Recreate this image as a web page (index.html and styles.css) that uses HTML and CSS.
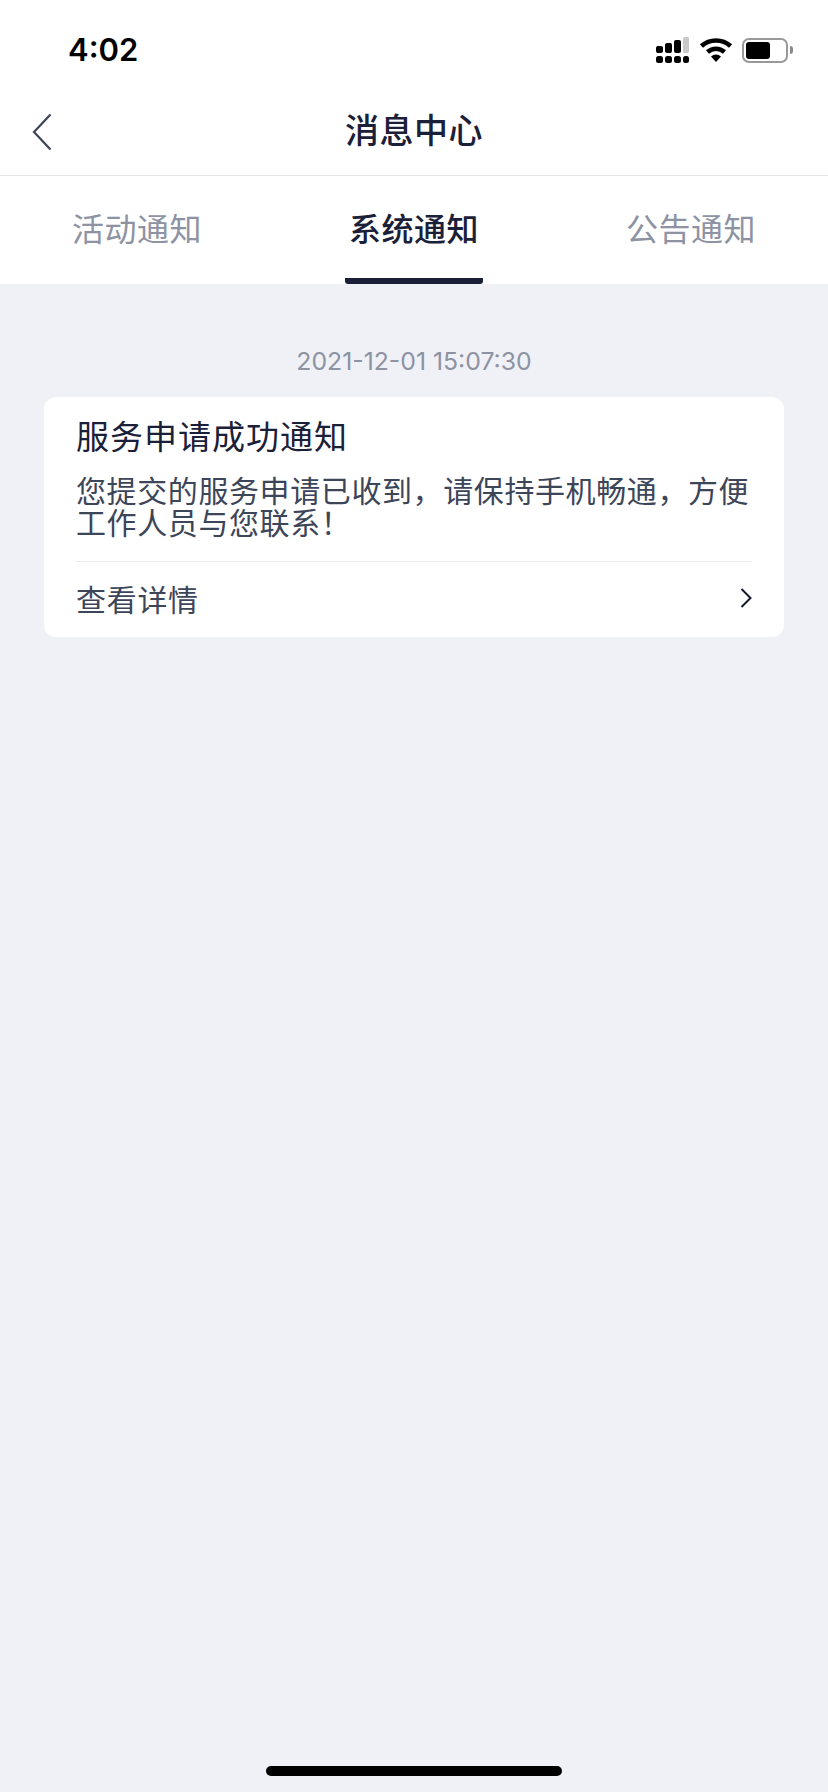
FILE: index.html
```html
<!DOCTYPE html>
<html>
<head>
  <title>消息中心</title>
  <meta name="viewport" content="width=device-width, initial-scale=1">
  <link rel="stylesheet" href="styles.css">
</head>
<body>
  <div class="status-bar">
    <span class="clock">4:02</span>
    <div class="status-icons">
      <svg class="icon-signal" width="34" height="26" viewBox="0 0 34 26">
        <rect x="0" y="9" width="7" height="7" rx="2" fill="#000"/>
        <rect x="9" y="6" width="7" height="10" rx="2" fill="#000"/>
        <rect x="18" y="3" width="7" height="13" rx="2" fill="#000"/>
        <rect x="27" y="0" width="6" height="16" rx="1.5" fill="#c9c9c9"/>
        <rect x="0" y="19" width="7" height="7" rx="2.5" fill="#000"/>
        <rect x="9" y="19" width="7" height="7" rx="2.5" fill="#000"/>
        <rect x="18" y="19" width="7" height="7" rx="2.5" fill="#000"/>
        <rect x="27" y="19" width="6" height="7" rx="2.5" fill="#000"/>
      </svg>
      <svg class="icon-wifi" width="32" height="24" viewBox="0 0 32 24">
        <path d="M1.5 8C9.5 0.5 22.5 0.5 30.5 8" fill="none" stroke="#000" stroke-width="4.5"/>
        <path d="M7.5 14C12.5 9.5 19.5 9.5 24.5 14" fill="none" stroke="#000" stroke-width="4.5"/>
        <path d="M11 18.5C14 15.8 18 15.8 21 18.5L16 24Z" fill="#000"/>
      </svg>
      <div class="battery">
        <div class="battery-body"><div class="battery-level"></div></div>
        <div class="battery-nub"></div>
      </div>
    </div>
  </div>

  <div class="nav-bar">
    <svg class="back" width="20" height="38" viewBox="0 0 20 38">
      <path d="M18.5 1.5L2 19L18.5 36.5" fill="none" stroke="#3d4559" stroke-width="2.2"/>
    </svg>
    <h1>消息中心</h1>
  </div>

  <div class="tabs">
    <div class="tab">活动通知</div>
    <div class="tab active">系统通知</div>
    <div class="tab">公告通知</div>
  </div>

  <div class="content">
    <div class="time">2021-12-01 15:07:30</div>
    <div class="card">
      <div class="card-title">服务申请成功通知</div>
      <div class="card-text">您提交的服务申请已收到，请保持手机畅通，方便工作人员与您联系！</div>
      <div class="card-link">
        <span>查看详情</span>
        <svg width="12" height="20" viewBox="0 0 12 20">
          <path d="M1.5 1L10.5 10L1.5 19" fill="none" stroke="#14192e" stroke-width="2"/>
        </svg>
      </div>
    </div>
  </div>

  <div class="home-area"><div class="home-bar"></div></div>
</body>
</html>
```

FILE: styles.css
```css
* {
  box-sizing: border-box;
}
body {
  margin: 0;
  width: 828px;
  height: 1792px;
  display: flex;
  flex-direction: column;
  background: #f0f1f6;
  font-family: "Noto Sans CJK SC", "Inter", sans-serif;
  color: #1a2038;
}
.status-bar {
  height: 88px;
  background: #fff;
  display: flex;
  justify-content: space-between;
  align-items: center;
  padding: 0 33px 0 68px;
}
.clock {
  font-family: "Inter", sans-serif;
  font-size: 31px;
  font-weight: 600;
  color: #000;
  margin-top: 11px;
}
.status-icons {
  display: flex;
  align-items: center;
  gap: 10px;
  margin-top: 12px;
  margin-right: 2px;
}
.icon-signal {
  display: block;
}
.icon-wifi {
  display: block;
}
.battery {
  display: flex;
  align-items: center;
  gap: 2px;
}
.battery-body {
  width: 46px;
  height: 25px;
  border: 2px solid #999;
  border-radius: 7px;
  padding: 2px;
}
.battery-level {
  width: 24px;
  height: 17px;
  background: #000;
  border-radius: 3px;
}
.battery-nub {
  width: 3px;
  height: 8px;
  background: #8a8a8a;
  border-radius: 0 3px 3px 0;
}
.nav-bar {
  height: 88px;
  background: #fff;
  border-bottom: 1px solid #e4e4e6;
  display: flex;
  align-items: center;
  justify-content: center;
  position: relative;
}
.back {
  position: absolute;
  left: 32px;
  top: 25px;
}
h1 {
  margin: 0;
  font-size: 34px;
  font-weight: 500;
  line-height: 48px;
  letter-spacing: 0.5px;
  margin-top: -5px;
}
.tabs {
  height: 108px;
  background: #fff;
  display: flex;
  justify-content: space-between;
  padding: 0 68px;
}
.tab {
  width: 138px;
  text-align: center;
  font-size: 32px;
  line-height: 46px;
  letter-spacing: 0.5px;
  padding-top: 28px;
  color: #8d93a3;
  white-space: nowrap;
}
.tab.active {
  color: #1a2038;
  font-weight: 500;
  border-bottom: 6px solid #1a2038;
  border-radius: 0 0 3px 3px;
}
.content {
  flex: 1;
  padding: 60px 44px 0;
}
.time {
  text-align: center;
  font-size: 24.8px;
  line-height: 34px;
  color: #8d93a3;
  font-family: "Inter", sans-serif;
  margin-bottom: 19px;
}
.card {
  background: #fff;
  border-radius: 12px;
  padding: 14px 32px 0;
}
.card-title {
  font-size: 33px;
  line-height: 48px;
  letter-spacing: 1px;
}
.card-text {
  font-size: 30px;
  line-height: 32px;
  letter-spacing: 0.6px;
  color: #3d4559;
  margin-top: 14px;
  padding-bottom: 24px;
  border-bottom: 1px solid #ececf0;
}
.card-link {
  height: 75px;
  padding-bottom: 4px;
  display: flex;
  justify-content: space-between;
  align-items: center;
  font-size: 30px;
  letter-spacing: 0.7px;
  color: #3d4559;
}
.home-area {
  height: 26px;
  display: flex;
  justify-content: center;
  margin-top: -16px;
  padding-bottom: 16px;
}
.home-bar {
  width: 296px;
  height: 10px;
  background: #000;
  border-radius: 5px;
}
```
